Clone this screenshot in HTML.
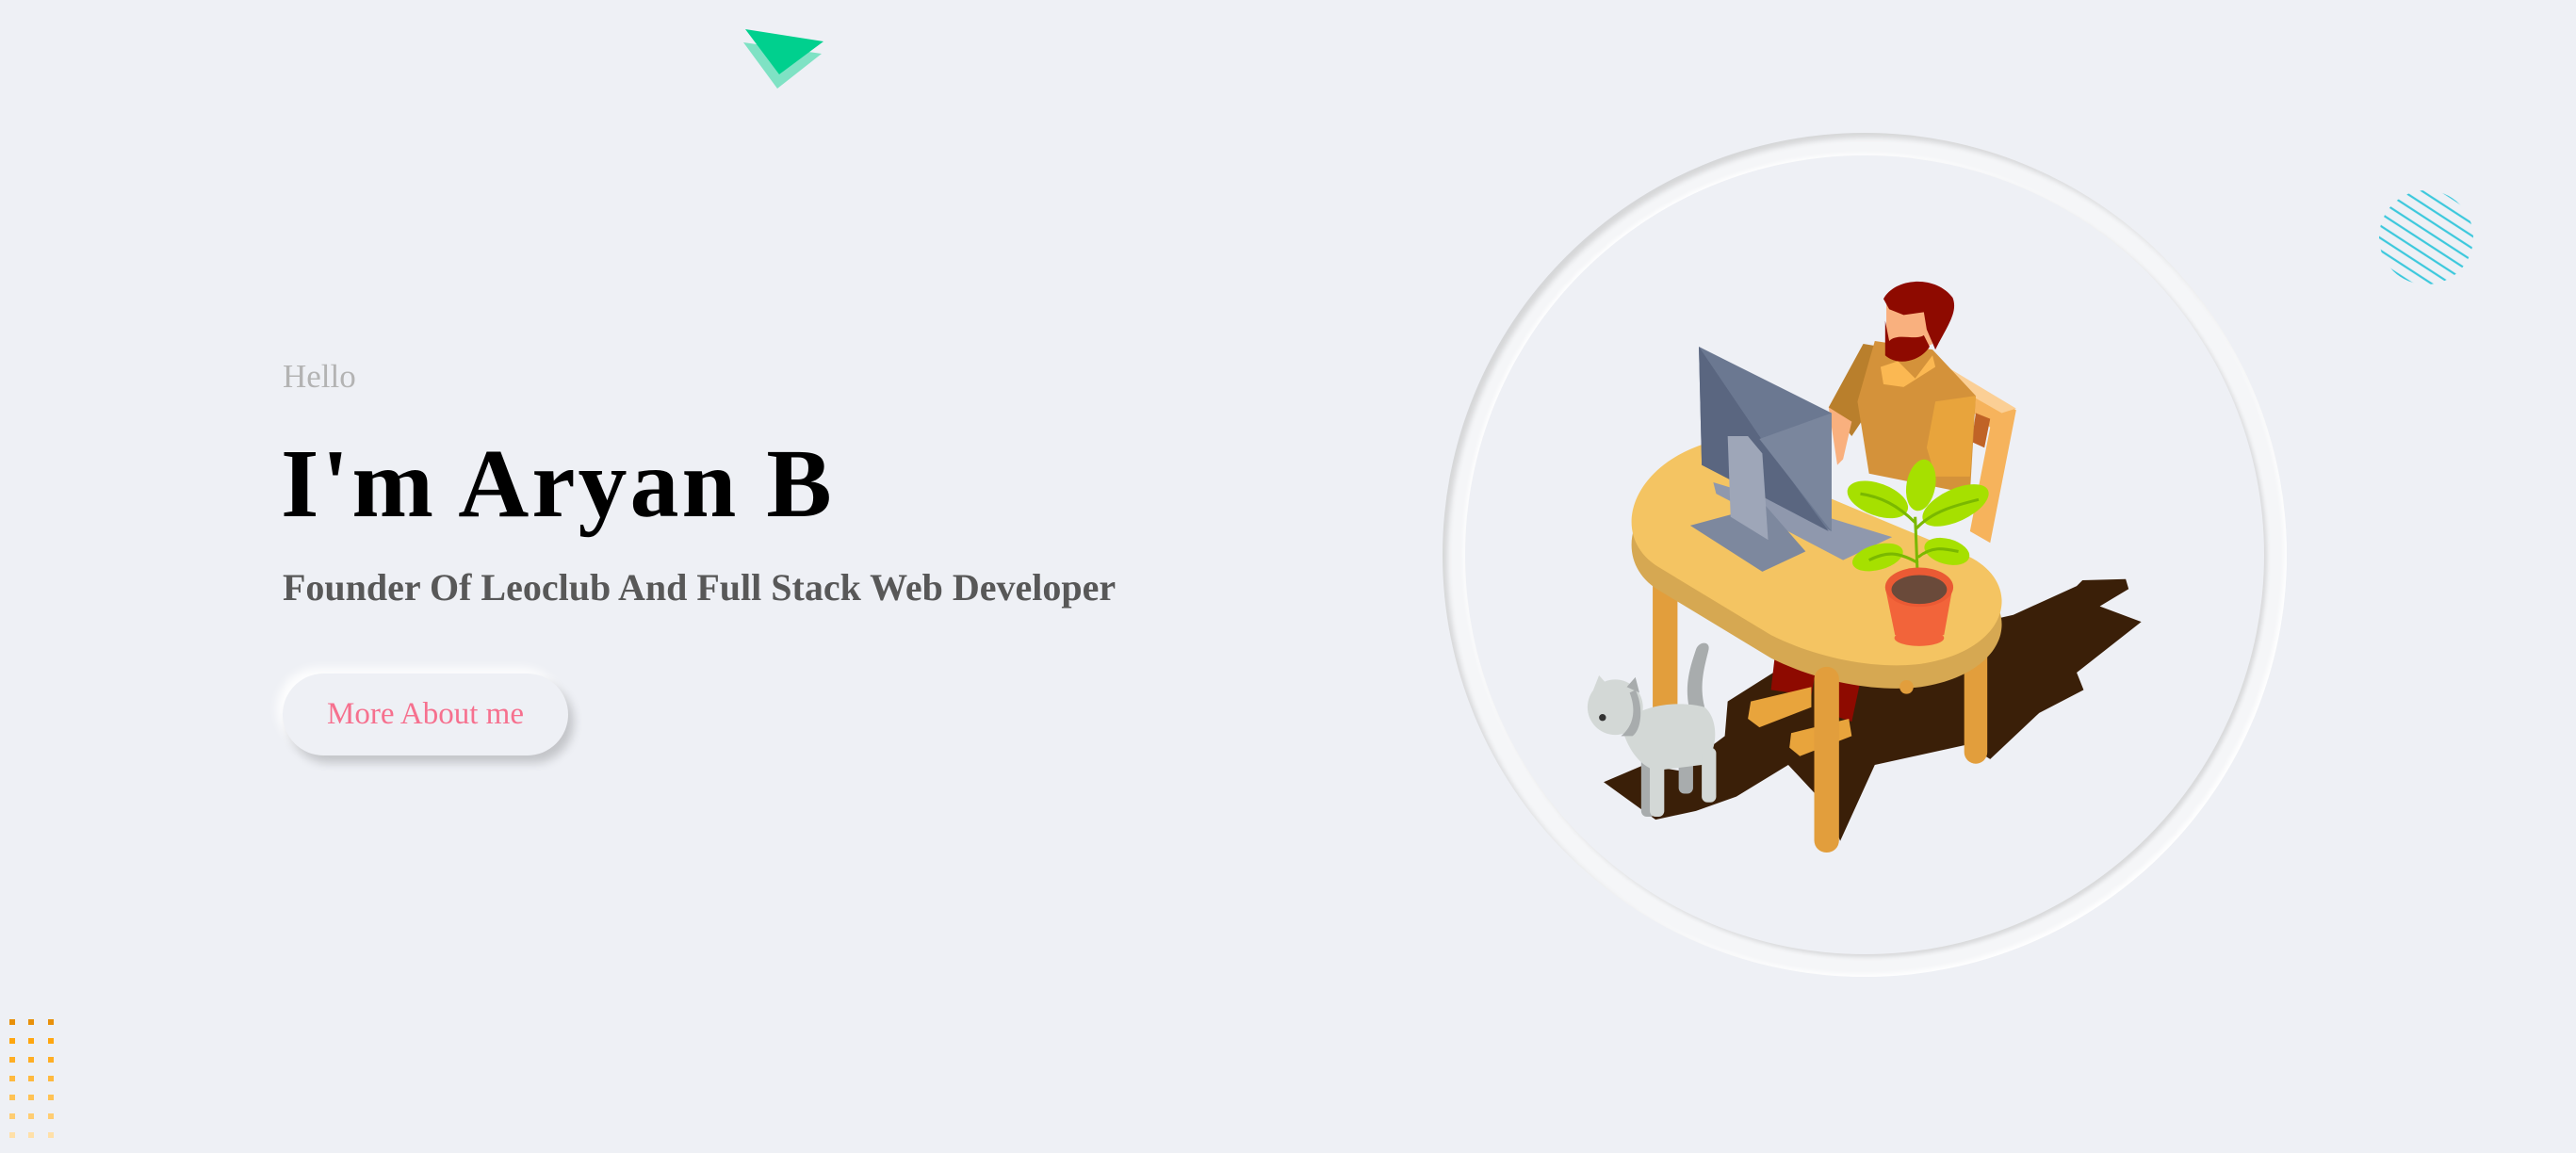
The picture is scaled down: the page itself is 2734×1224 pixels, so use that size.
<!DOCTYPE html>
<html><head><meta charset="utf-8"><style>
html,body{margin:0;padding:0}
body{width:2734px;height:1224px;background:#eef0f5;position:relative;overflow:hidden;font-family:"Liberation Serif",serif}
.hello{position:absolute;left:300px;top:382px;font-size:35px;color:#b3b3b3;line-height:1}
h1{position:absolute;left:298px;top:462px;margin:0;font-size:104px;font-weight:bold;color:#000;line-height:1;letter-spacing:3px}
h2{position:absolute;left:300px;top:604px;margin:0;font-size:40px;font-weight:bold;color:#585858;line-height:1;white-space:nowrap}
.btn{position:absolute;left:300px;top:715px;width:303px;height:87px;border-radius:44px;background:#eef0f5;box-shadow:6px 8px 10px rgba(0,0,0,.18),-6px -6px 10px rgba(255,255,255,.9);color:#f6708e;font-size:33px;line-height:87px;text-align:center}
.ring{position:absolute;left:1531px;top:141px;width:896px;height:896px;border-radius:50%;background:#f5f6f8;box-shadow:inset 5px 5px 6px rgba(0,0,0,.13),inset -3px -3px 5px rgba(255,255,255,.9)}
.inner{position:absolute;left:24px;top:24px;width:848px;height:848px;border-radius:50%;background:#eef0f5;box-shadow:3px 3px 5px rgba(0,0,0,.12),-2px -2px 4px rgba(255,255,255,.9)}
</style></head><body>
<svg style="position:absolute;left:0;top:0" width="2734" height="1224">
<polygon points="789,45 872,57 825,94" fill="#7fe2c4"/>
<polygon points="791,31 874,44 827,79" fill="#00d08e"/>
<defs>
<clipPath id="cc"><circle cx="2575" cy="252" r="50"/></clipPath>
<pattern id="st" width="11" height="11" patternUnits="userSpaceOnUse" patternTransform="rotate(33)"><line x1="0" y1="2" x2="11" y2="2" stroke="#3cc8dc" stroke-width="2.2"/></pattern>
</defs>
<rect x="2520" y="197" width="110" height="110" fill="url(#st)" clip-path="url(#cc)"/>
<g>
<g fill="#e8900a"><rect x="10" y="1082" width="6" height="6"/><rect x="30" y="1082" width="6" height="6"/><rect x="51" y="1082" width="6" height="6"/></g>
<g fill="#ffa60f"><rect x="10" y="1102" width="6" height="6"/><rect x="30" y="1102" width="6" height="6"/><rect x="51" y="1102" width="6" height="6"/></g>
<g fill="#ffae24"><rect x="10" y="1122" width="6" height="6"/><rect x="30" y="1122" width="6" height="6"/><rect x="51" y="1122" width="6" height="6"/></g>
<g fill="#ffb93e"><rect x="10" y="1142" width="6" height="6"/><rect x="30" y="1142" width="6" height="6"/><rect x="51" y="1142" width="6" height="6"/></g>
<g fill="#ffc254"><rect x="10" y="1162" width="6" height="6"/><rect x="30" y="1162" width="6" height="6"/><rect x="51" y="1162" width="6" height="6"/></g>
<g fill="#ffcd72"><rect x="10" y="1182" width="6" height="6"/><rect x="30" y="1182" width="6" height="6"/><rect x="51" y="1182" width="6" height="6"/></g>
<g fill="#ffe0a8"><rect x="10" y="1202" width="6" height="6"/><rect x="30" y="1202" width="6" height="6"/><rect x="51" y="1202" width="6" height="6"/></g>
</g>
</svg>
<div class="hello">Hello</div>
<h1>I'm Aryan B</h1>
<h2>Founder Of Leoclub And Full Stack Web Developer</h2>
<div class="btn">More About me</div>
<div class="ring"><div class="inner"></div></div>
<svg style="position:absolute;left:1500px;top:120px" width="960" height="940" viewBox="0 0 1568 1535">
<!-- shadow -->
<polygon fill="#3a1f08" points="545,1020 640,960 1040,870 1150,820 1160,810 1235,808 1240,825 1190,855 1262,882 1150,970 1162,1000 1085,1040 1000,1120 960,1095 800,1130 740,1262 715,1200 650,1130 560,1185 490,1210 420,1225 330,1160 400,1130 460,1140 540,1080"/>
<!-- chair -->
<polygon fill="#f6b35c" points="925,440 1045,515 1000,745 965,725 1000,545 915,470"/>
<polygon fill="#fbcf95" points="925,440 1045,512 1020,520 915,460"/>
<polygon fill="#c06326" points="975,520 1000,530 990,580 968,570"/>
<!-- legs back -->
<rect x="415" y="800" width="43" height="260" rx="10" fill="#e29e3c"/>
<rect x="955" y="900" width="40" height="228" rx="20" fill="#e29e3c"/>
<!-- pants/shoes -->
<polygon fill="#8e0a00" points="628,930 700,950 690,1010 620,1000"/>
<polygon fill="#8e0a00" points="735,960 775,985 760,1055 730,1045"/>
<polygon fill="#e8a43c" points="585,1020 690,995 690,1030 600,1065 580,1050"/>
<polygon fill="#e8a43c" points="655,1075 755,1050 760,1080 670,1115 652,1100"/>
<!-- person body -->
<polygon fill="#b97f2c" points="780,400 840,410 800,500 760,560 720,510"/>
<polygon fill="#d4923a" points="800,395 900,410 975,490 965,660 790,625 770,500"/>
<polygon fill="#e8a43c" points="905,500 975,490 965,630 905,630 890,580"/>
<polygon fill="#f9b07e" points="720,510 760,535 745,600 735,610"/>
<polygon fill="#fbb852" points="810,440 840,430 870,460 900,420 905,440 850,475 815,470"/>
<!-- head -->
<polygon fill="#f9b07e" points="820,325 890,330 900,400 840,430 820,410"/>
<path fill="#8e0a00" d="M815,322 C835,285 905,280 935,320 C945,345 925,370 905,410 L890,375 L885,345 L850,350 L825,340 Z"/>
<path fill="#8e0a00" d="M818,360 L825,395 C840,380 870,395 885,385 L895,405 C880,430 840,440 818,420 Z"/>
<!-- table side & top -->
<path fill="#d6a852" d="M500,615 L955,805 C1060,850 1040,970 880,995 C800,1005 700,985 620,945 L430,830 C340,780 370,660 500,615 Z"/>
<path fill="#f4c462" d="M500,575 L955,765 C1060,810 1040,930 880,955 C800,965 700,945 620,905 L430,790 C340,740 370,620 500,575 Z"/>
<!-- front leg -->
<rect x="695" y="960" width="43" height="322" rx="21" fill="#e29e3c"/>
<circle cx="855" cy="995" r="12" fill="#e29e3c"/>
<!-- monitor -->
<polygon fill="#8f98ad" points="520,640 830,735 745,775 525,660"/>
<polygon fill="#7d889e" points="480,715 610,680 680,760 605,795"/>
<polygon fill="#6b7891" points="495,405 725,520 725,725 500,610"/>
<polygon fill="#5a6680" points="495,405 600,560 720,725 500,610"/>
<polygon fill="#7a869d" points="600,565 725,520 725,725"/>
<polygon fill="#9ea6b8" points="545,560 580,560 605,590 615,740 550,700"/>
<!-- plant -->
<g fill="#a6e000">
<ellipse cx="805" cy="670" rx="55" ry="28" transform="rotate(20 805 670)"/>
<ellipse cx="940" cy="680" rx="62" ry="28" transform="rotate(-25 940 680)"/>
<ellipse cx="880" cy="645" rx="25" ry="45" transform="rotate(10 880 645)"/>
<ellipse cx="805" cy="770" rx="45" ry="22" transform="rotate(-15 805 770)"/>
<ellipse cx="925" cy="760" rx="40" ry="22" transform="rotate(15 925 760)"/>
</g>
<path d="M875,825 L870,700 M875,780 C840,760 820,760 790,775 M875,770 C900,750 920,755 945,760 M872,720 C900,690 940,680 980,670 M870,710 C840,680 810,665 775,660" stroke="#7ab800" stroke-width="5" fill="none"/>
<polygon fill="#f2643a" points="818,822 935,822 920,905 835,905"/>
<ellipse cx="877" cy="910" rx="43" ry="14" fill="#f2643a"/>
<ellipse cx="877" cy="822" rx="59" ry="34" fill="#ea5a34"/>
<ellipse cx="877" cy="826" rx="48" ry="25" fill="#6a4a3a"/>
<!-- cat -->
<path d="M478,1030 C470,990 480,960 490,930 C495,915 515,915 512,930 C505,960 495,990 505,1030 Z" fill="#a8acad"/>
<rect x="395" y="1100" width="25" height="120" rx="10" fill="#a8acad"/>
<rect x="460" y="1100" width="25" height="80" rx="10" fill="#a8acad"/>
<path d="M360,1060 C400,1020 470,1020 505,1030 C530,1050 530,1110 500,1130 L420,1140 C390,1130 370,1100 360,1060 Z" fill="#d3d8d6"/>
<rect x="410" y="1110" width="25" height="110" rx="10" fill="#d3d8d6"/>
<rect x="500" y="1100" width="25" height="95" rx="10" fill="#d3d8d6"/>
<circle cx="350" cy="1030" r="48" fill="#d3d8d6"/>
<polygon fill="#d3d8d6" points="312,1000 322,975 340,995"/>
<polygon fill="#a8acad" points="370,995 385,978 392,1005"/>
<path d="M385,1000 C400,1030 395,1070 380,1080 L360,1080 C385,1060 385,1030 375,1005 Z" fill="#a8acad"/>
<circle cx="328" cy="1048" r="6" fill="#333"/>
</svg>
</body></html>
